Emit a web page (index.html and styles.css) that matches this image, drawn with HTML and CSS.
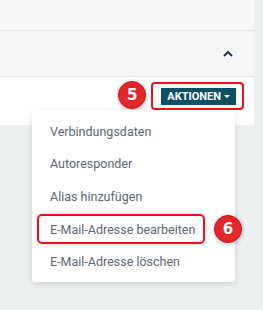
FILE: index.html
```html
<!DOCTYPE html>
<html lang="de">

<head>
    <meta charset="UTF-8">
    <meta name="viewport" content="width=device-width, initial-scale=1.0">
    <title>Aktionen</title>
    <link rel="stylesheet" href="styles.css">
</head>

<body>
    <div class="card">
        <div class="card-top"></div>
        <div class="card-head">
            <svg class="chevron" width="10" height="7" viewBox="0 0 10 7">
                <path d="M1 6 L5 2 L9 6" fill="none" stroke="#2b3440" stroke-width="2"/>
            </svg>
        </div>
        <div class="card-body">
            <span class="badge">5</span>
            <div class="mark">
                <button class="btn">AKTIONEN <span class="caret"></span></button>
            </div>
        </div>
    </div>

    <ul class="menu">
        <li>Verbindungsdaten</li>
        <li>Autoresponder</li>
        <li>Alias hinzufügen</li>
        <li class="marked">
            <span class="mark-item">E-Mail-Adresse bearbeiten</span>
            <span class="badge">6</span>
        </li>
        <li>E-Mail-Adresse löschen</li>
    </ul>
</body>

</html>
```

FILE: styles.css
```css
body {
    margin: 0;
    width: 263px;
    height: 310px;
    background: #edf0f1;
    font-family: Roboto, "Liberation Sans", sans-serif;
    position: relative;
    overflow: hidden;
}

.card {
    width: 254px;
    background: #fff;
}

.card-top {
    height: 30px;
    background: #f8f8f8;
    border-bottom: 1px solid #e6e6e6;
}

.card-head {
    height: 45px;
    background: #f6f6f6;
    border-bottom: 1px solid #e3e3e3;
    display: flex;
    align-items: center;
    justify-content: flex-end;
    padding-right: 21px;
}

.card-body {
    height: 43px;
    display: flex;
    align-items: flex-start;
    justify-content: flex-end;
    padding-top: 5px;
    padding-right: 10px;
    gap: 5px;
}

.badge {
    flex: none;
    width: 28px;
    height: 28px;
    box-sizing: border-box;
    border-radius: 50%;
    background: #e3262a;
    border: 1px solid #c9151a;
    box-shadow: 0 1px 4px rgba(0, 0, 0, 0.3);
    color: #fff;
    font-family: "DejaVu Sans", sans-serif;
    font-weight: bold;
    font-size: 15px;
    display: flex;
    align-items: center;
    justify-content: center;
}

.card-body .badge {
    margin-top: -1px;
}

.mark {
    border: 2px solid #e8141b;
    border-radius: 4px;
    padding: 4px 6px 1px 8px;
    height: 19px;
}

.btn {
    background: #0d4f63;
    color: #fff;
    border: 0;
    font-family: Roboto, sans-serif;
    font-weight: bold;
    font-size: 11px;
    height: 17px;
    padding: 0 6px;
    display: flex;
    align-items: center;
    gap: 3px;
}

.caret {
    border-left: 3px solid transparent;
    border-right: 3px solid transparent;
    border-top: 3px solid #fff;
}

.menu {
    position: absolute;
    left: 32px;
    top: 110px;
    width: 203px;
    height: 172px;
    margin: 0;
    padding: 5px 0 0;
    box-sizing: border-box;
    list-style: none;
    background: #fff;
    border-radius: 3px;
    box-shadow: 0 2px 6px rgba(0, 0, 0, 0.12);
}

.menu li {
    height: 32.6px;
    display: flex;
    align-items: center;
    padding-left: 18px;
    font-size: 12.5px;
    color: #5d6672;
    white-space: nowrap;
}

.menu li.marked {
    padding-left: 5px;
    gap: 9px;
}

.mark-item {
    flex: none;
    box-sizing: border-box;
    width: 168px;
    height: 30px;
    display: flex;
    align-items: center;
    border: 2px solid #e8141b;
    border-radius: 5px;
    padding-left: 11px;
    box-shadow: 0 0 4px rgba(0, 0, 0, 0.2);
}
```
